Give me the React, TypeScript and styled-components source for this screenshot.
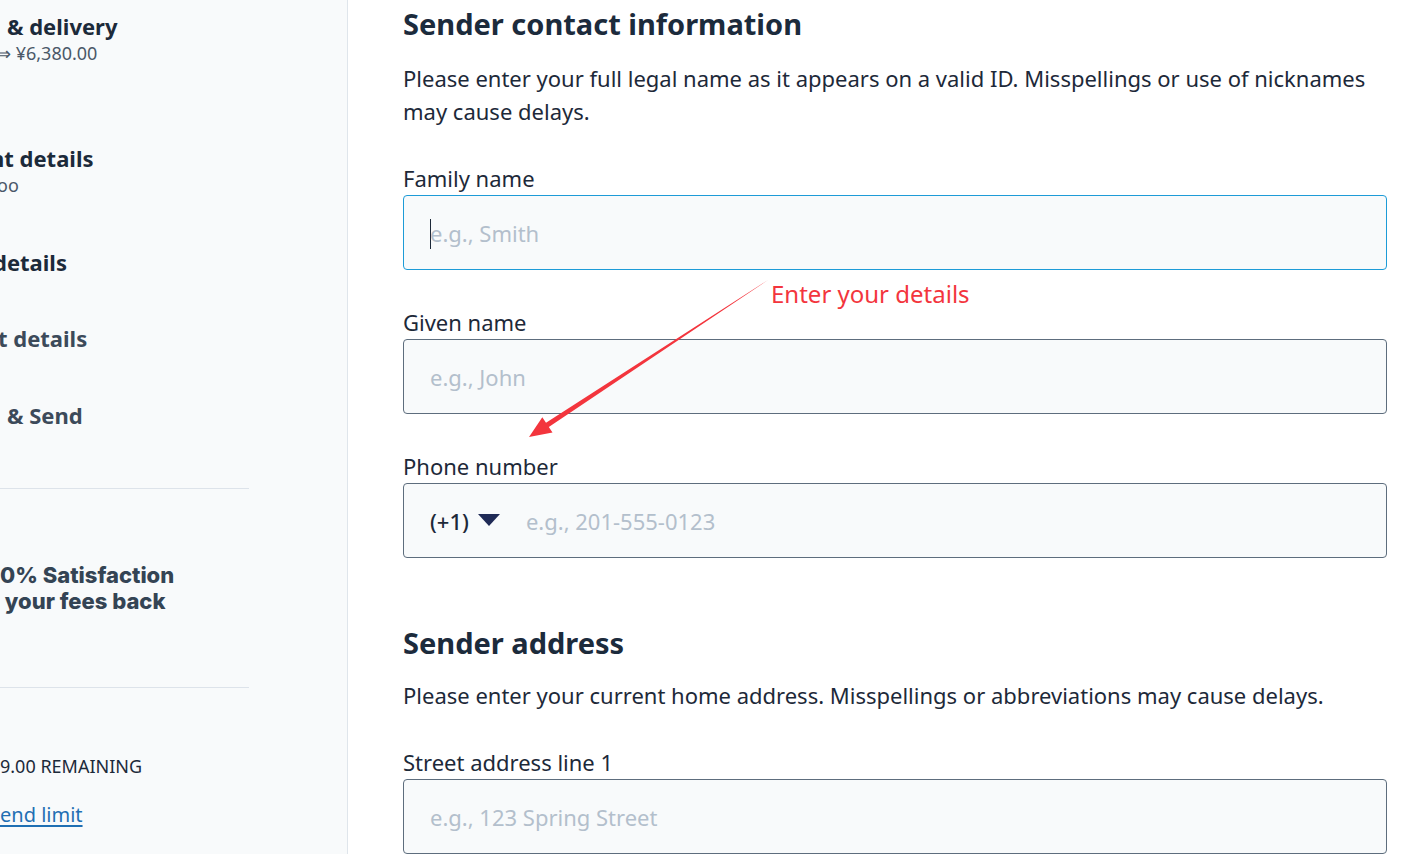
import React from "react";
import styled, { createGlobalStyle } from "styled-components";

const GlobalStyle = createGlobalStyle`
  html, body {
    margin: 0;
    padding: 0;
    background: #ffffff;
  }
  body {
    font-family: "Noto Sans", "Open Sans", sans-serif;
    color: #1d2939;
    overflow: hidden;
  }
`;

const steps = [
  { title: "& delivery", sub: "⇒ ¥6,380.00", indent: 7, subIndent: -4, after: 77, dim: false },
  { title: "nt details", sub: "oo", indent: -10, subIndent: -3, after: 49, dim: false },
  { title: "details", indent: -7, after: 48, dim: false },
  { title: "t details", indent: -2, after: 49, dim: true },
  { title: "& Send", indent: 7, after: 59, dim: true },
];

const fields = [
  { label: "Family name", placeholder: "e.g., Smith", focused: true },
  { label: "Given name", placeholder: "e.g., John" },
];

const App = () => {
  return (
    <Page>
      <GlobalStyle />
      <Sidebar>
        <StepList>
          {steps.map((step) => (
            <Step key={step.title} $after={step.after}>
              <StepTitle $indent={step.indent} $dim={step.dim}>
                {step.title}
              </StepTitle>
              {step.sub && (
                <StepSub $indent={step.subIndent ?? 0}>{step.sub}</StepSub>
              )}
            </Step>
          ))}
        </StepList>
        <Divider />
        <Guarantee>
          0% Satisfaction
          <br />
          &nbsp;your fees back
        </Guarantee>
        <Divider />
        <Remaining>9.00 REMAINING</Remaining>
        <LimitLink href="#">end limit</LimitLink>
      </Sidebar>

      <Main>
        <Heading>Sender contact information</Heading>
        <Intro>
          Please enter your full legal name as it appears on a valid ID.
          Misspellings or use of nicknames may cause delays.
        </Intro>

        {fields.map((field) => (
          <Field key={field.label}>
            <Label>{field.label}</Label>
            <InputBox $focused={field.focused}>
              {field.focused && <Caret />}
              <Placeholder>{field.placeholder}</Placeholder>
            </InputBox>
          </Field>
        ))}

        <Field>
          <Label>Phone number</Label>
          <InputBox>
            <CountryCode>
              (+1)
              <svg width="22" height="13" viewBox="0 0 22 13">
                <path d="M0 0 H22 L11 12 Z" fill="#1f2a56" />
              </svg>
            </CountryCode>
            <Placeholder>e.g., 201-555-0123</Placeholder>
          </InputBox>
        </Field>

        <Heading $gap={65}>Sender address</Heading>
        <Intro $gap={16}>
          Please enter your current home address. Misspellings or abbreviations
          may cause delays.
        </Intro>

        <Field>
          <Label>Street address line 1</Label>
          <InputBox>
            <Placeholder>e.g., 123 Spring Street</Placeholder>
          </InputBox>
        </Field>
      </Main>

      <Note>Enter your details</Note>
      <ArrowLayer width="1428" height="854" viewBox="0 0 1428 854">
        <polygon
          points="768,280 548.8,427 552.5,432.5 529,437 542.3,417.2 546,422.8"
          fill="#f3353d"
        />
      </ArrowLayer>
    </Page>
  );
};

const Page = styled.div`
  position: relative;
  display: flex;
  width: 1428px;
  height: 854px;
  overflow: hidden;
`;

const Sidebar = styled.aside`
  flex: 0 0 348px;
  box-sizing: border-box;
  background: #f8fafb;
  border-right: 1px solid #dfe5eb;
  display: flex;
  flex-direction: column;
  overflow: hidden;
  white-space: nowrap;
`;

const StepList = styled.div`
  display: flex;
  flex-direction: column;
  padding-top: 12px;
`;

const Step = styled.div<{ $after: number }>`
  display: flex;
  flex-direction: column;
  padding-bottom: ${(p) => p.$after}px;
`;

const StepTitle = styled.div<{ $indent: number; $dim: boolean }>`
  margin-left: ${(p) => p.$indent}px;
  font-size: 22px;
  line-height: 28px;
  font-weight: 700;
  color: ${(p) => (p.$dim ? "#3c4a5a" : "#1c2a3a")};
`;

const StepSub = styled.div<{ $indent: number }>`
  margin-left: ${(p) => p.$indent}px;
  font-size: 18px;
  line-height: 27px;
  color: #4a5868;
`;

const Divider = styled.hr`
  width: 249px;
  margin: 0;
  border: none;
  border-top: 1px solid #dde3ea;
`;

const Guarantee = styled.div`
  margin: 73px 0 73px;
  font-family: Inter, "Noto Sans", sans-serif;
  font-size: 22px;
  line-height: 26px;
  font-weight: 800;
  color: #344454;
`;

const Remaining = styled.div`
  margin-top: 66px;
  font-size: 18px;
  line-height: 24px;
  color: #1c2a3a;
`;

const LimitLink = styled.a`
  margin-top: 22px;
  font-size: 20px;
  line-height: 30px;
  color: #1f6fb3;
  text-decoration: underline;
  text-underline-offset: 3px;
`;

const Main = styled.main`
  flex: 1;
  display: flex;
  flex-direction: column;
  padding: 4px 41px 0 55px;
`;

const Heading = styled.h2<{ $gap?: number }>`
  margin: ${(p) => p.$gap ?? 0}px 0 0;
  font-size: 29px;
  line-height: 40px;
  font-weight: 700;
  color: #1c2b3c;
`;

const Intro = styled.p<{ $gap?: number }>`
  margin: ${(p) => p.$gap ?? 18}px 0 0;
  font-size: 22px;
  line-height: 33px;
  color: #1d2939;
`;

const Field = styled.div`
  display: flex;
  flex-direction: column;
  margin-top: 35px;

  & + & {
    margin-top: 37px;
  }
`;

const Label = styled.label`
  font-size: 22px;
  line-height: 30px;
  color: #1d2939;
`;

const InputBox = styled.div<{ $focused?: boolean }>`
  position: relative;
  margin-top: 2px;
  height: 75px;
  box-sizing: border-box;
  display: flex;
  align-items: center;
  padding: 0 26px;
  background: #f8fafb;
  border: 1px solid ${(p) => (p.$focused ? "#1d9bd7" : "#5d6d7d")};
  border-radius: 4px;
`;

const Caret = styled.span`
  position: absolute;
  left: 26px;
  top: 23px;
  width: 1px;
  height: 30px;
  background: #1d2939;
`;

const Placeholder = styled.span`
  font-size: 22px;
  color: #b3bfcc;
`;

const CountryCode = styled.span`
  display: flex;
  align-items: center;
  gap: 9px;
  margin-right: 26px;
  font-size: 22px;
  font-weight: 500;
  color: #1d2939;
`;

const Note = styled.div`
  position: absolute;
  left: 771px;
  top: 278px;
  font-size: 24px;
  line-height: 32px;
  color: #f3353d;
`;

const ArrowLayer = styled.svg`
  position: absolute;
  inset: 0;
  pointer-events: none;
`;

export default App;
